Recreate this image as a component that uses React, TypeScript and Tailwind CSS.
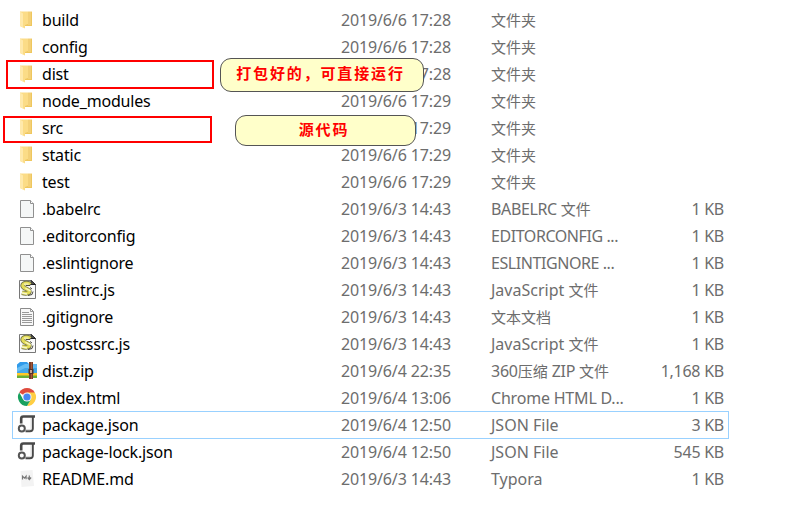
import React from "react";

type Kind = "folder" | "blank" | "script" | "text" | "zip" | "chrome" | "json" | "md";

interface Entry {
  name: string;
  date: string;
  type: string;
  size?: string;
  kind: Kind;
  selected?: boolean;
  typeTracking?: string;
}

const entries: Entry[] = [
  { name: "build", date: "2019/6/6 17:28", type: "文件夹", kind: "folder" },
  { name: "config", date: "2019/6/6 17:28", type: "文件夹", kind: "folder" },
  { name: "dist", date: "2019/6/6 17:28", type: "文件夹", kind: "folder" },
  { name: "node_modules", date: "2019/6/6 17:29", type: "文件夹", kind: "folder" },
  { name: "src", date: "2019/6/6 17:29", type: "文件夹", kind: "folder" },
  { name: "static", date: "2019/6/6 17:29", type: "文件夹", kind: "folder" },
  { name: "test", date: "2019/6/6 17:29", type: "文件夹", kind: "folder" },
  { name: ".babelrc", date: "2019/6/3 14:43", type: "BABELRC 文件", size: "1 KB", kind: "blank", typeTracking: "tracking-[-0.36px]" },
  { name: ".editorconfig", date: "2019/6/3 14:43", type: "EDITORCONFIG ...", size: "1 KB", kind: "blank", typeTracking: "tracking-[-0.43px]" },
  { name: ".eslintignore", date: "2019/6/3 14:43", type: "ESLINTIGNORE ...", size: "1 KB", kind: "blank", typeTracking: "tracking-[-0.43px]" },
  { name: ".eslintrc.js", date: "2019/6/3 14:43", type: "JavaScript 文件", size: "1 KB", kind: "script" },
  { name: ".gitignore", date: "2019/6/3 14:43", type: "文本文档", size: "1 KB", kind: "text" },
  { name: ".postcssrc.js", date: "2019/6/3 14:43", type: "JavaScript 文件", size: "1 KB", kind: "script" },
  { name: "dist.zip", date: "2019/6/4 22:35", type: "360压缩 ZIP 文件", size: "1,168 KB", kind: "zip", typeTracking: "tracking-[-0.25px]" },
  { name: "index.html", date: "2019/6/4 13:06", type: "Chrome HTML D...", size: "1 KB", kind: "chrome", typeTracking: "tracking-[-0.2px]" },
  { name: "package.json", date: "2019/6/4 12:50", type: "JSON File", size: "3 KB", kind: "json", selected: true },
  { name: "package-lock.json", date: "2019/6/4 12:50", type: "JSON File", size: "545 KB", kind: "json" },
  { name: "README.md", date: "2019/6/3 14:43", type: "Typora", size: "1 KB", kind: "md" },
];

function Glyph({ kind }: { kind: Kind }) {
  switch (kind) {
    case "folder":
      return (
        <>
          <path d="M8 3h6l.8-.8h.2V17H8z" fill="#efc75e" />
          <path d="M11 2.5h3V16h-3z" fill="#f3d078" />
          <path d="M3 2.5h8V15l-3 1v3.5L3 17z" fill="#fbdc87" />
          <path d="M3 2.5l3 2v14L3 17z" fill="#ffe9ab" />
        </>
      );
    case "blank":
      return (
        <>
          <path d="M3.5 2.5h10l3 3v14h-13z" fill="#f5f7f7" stroke="#909090" />
          <path d="M13.5 2.5v3h3" fill="#fff" stroke="#909090" />
        </>
      );
    case "text":
      return (
        <>
          <path d="M3.5 2.5h10l3 3v14h-13z" fill="#f8f8f8" stroke="#8b8b8b" />
          <path d="M13.5 2.5v3h3M5 6.5h7M5 8.5h10M5 10.5h10M5 12.5h10M5 14.5h10M5 16.5h10" fill="none" stroke="#999" />
        </>
      );
    case "script":
      return (
        <>
          <path d="M2.5 1.5h12l4 4v14h-16z" fill="#fafafa" stroke="#777" />
          <path d="M14 1.5v4h4.5z" fill="#555" stroke="#222" />
          <path d="M13 5.5C11.5 3 6 3.5 5.6 6.6c-.4 3 7.2 3.4 6.8 6-.3 2-4 2.2-7.4 1.2" fill="none" stroke="#77774a" strokeWidth="4.6" />
          <path d="M13 5.5C11.5 3.5 6 3.8 5.8 6.6c-.3 3 7 3.4 6.6 6-.3 1.8-4 2-7.4 1.2" fill="none" stroke="#e4dd58" strokeWidth="3.1" />
          <path d="M7 5.2h4.5M8.5 9.2l5 2.7M5 14l5 1" fill="none" stroke="#f8f6c6" strokeWidth="1.3" />
          <path d="M9 6.5h4l1-1.5M13 8.5l2 1.5M11 16.5l4-1 1-3" fill="none" stroke="#4b4b40" />
        </>
      );
    case "zip":
      return (
        <>
          <path d="M0 4.5L3 2h7l2 2h8v10H0z" fill="#319bea" />
          <path d="M0 8l8-4h12v8H0z" fill="#66bdf4" />
          <path d="M0 12l8-4h12v5H0z" fill="#43a7e9" />
          <path d="M0 13h20v3H0z" fill="#ffc928" />
          <path d="M0 15.5h20V18H0z" fill="#68ae38" />
          <path d="M12 2h4v17h-4z" fill="#783e29" />
          <path d="M14 2h1v17h-1z" fill="#a5583a" />
          <path d="M11.5 9h5v5h-5z" fill="#53332a" />
          <path d="M13 10h2v3h-2z" fill="#c6a38f" />
        </>
      );
    case "chrome":
      return (
        <>
          <path d="M10 10L2.21 5.5A9 9 0 0 1 17.8 5.5z" fill="#df4b3e" />
          <path d="M10 5.5h7.8A9 9 0 0 1 10 19l4-7z" fill="#ffce43" />
          <path d="M6.1 12.3L2.2 5.5A9 9 0 0 0 10 19l4-6.8z" fill="#18a15f" />
          <circle cx="10" cy="10" r="4.6" fill="#f5f5f5" />
          <circle cx="10" cy="10" r="3.6" fill="#4687f4" />
        </>
      );
    case "json":
      return (
        <>
          <path d="M4.2 9.5V4.6q0-2.1 2.2-2.1H18" fill="none" stroke="#494949" strokeWidth="2.6" />
          <path d="M15.8 3v11.5q0 2.7-2.8 2.7H8.5" fill="none" stroke="#494949" strokeWidth="2" />
          <path d="M14 4v11.5H9" fill="none" stroke="#dedede" />
          <circle cx="4.8" cy="14.6" r="3" fill="#fff" stroke="#555" strokeWidth="2" />
        </>
      );
    case "md":
      return (
        <>
          <path d="M3.5 3l12-1 1.5 16-12.5 1z" fill="#f3f3f3" />
          <path d="M5.5 11.5V8.2l2 2 1.6-2v3.1" fill="none" stroke="#777" strokeWidth="1.2" />
          <path d="M12.3 7.5v3.8m-1.7-1.8l1.7 2 1.8-2" fill="none" stroke="#777" strokeWidth="1.2" />
        </>
      );
  }
}

function TypeLabel({ text }: { text: string }) {
  const runs = text.split(/([\u4e00-\u9fff]+)/).filter(Boolean);
  return (
    <>
      {runs.map((run, i) => (
        <span key={i} className={/[\u4e00-\u9fff]/.test(run) ? "text-[15px] tracking-normal" : "text-[16px]"}>
          {run}
        </span>
      ))}
    </>
  );
}

function Row({ entry }: { entry: Entry }) {
  return (
    <div
      className={
        "flex w-[717px] items-center whitespace-pre pl-[5px] " +
        (entry.selected ? "-mb-px h-7 pt-px shadow-[inset_0_0_0_1px_#99d1ff]" : "h-[27px] pt-[2px]")
      }
    >
      <svg className="mb-1 h-5 w-5 shrink-0" viewBox="0 0 20 20">
        <Glyph kind={entry.kind} />
      </svg>
      <span className="ml-[5px] w-[299px] tracking-[-0.18px] text-black">{entry.name}</span>
      <span className="w-[150px] tracking-[-0.14px]">{entry.date}</span>
      <span className={"w-[150px] " + (entry.typeTracking ?? "")}>
        <TypeLabel text={entry.type} />
      </span>
      <span className="w-[83px] text-right tracking-[-0.25px]">{entry.size}</span>
    </div>
  );
}

export default function App() {
  return (
    <main className="relative h-[507px] w-[786px] overflow-hidden bg-white pl-3 pt-[6px] font-['Noto_Sans','Noto_Sans_CJK_SC',sans-serif] text-[16px] leading-[27px] text-[#6d6d6d]">
      {entries.map((entry) => (
        <Row key={entry.name} entry={entry} />
      ))}
      <div className="absolute left-[6px] top-[60px] h-[29px] w-[208px] border-2 border-[#f00]" />
      <div className="absolute left-[3px] top-[116px] h-[27px] w-[209px] border-2 border-[#f00]" />
      <div className="absolute left-[220px] top-[58px] flex h-[34px] w-[204px] justify-center rounded-[11px] border border-[#555] bg-[#ffffca] pr-[3px] font-['Noto_Sans_CJK_SC',sans-serif] text-[15px] font-bold tracking-[1.85px] text-[#f00]">
        打包好的，可直接运行
      </div>
      <div className="absolute left-[235px] top-[115px] flex h-[31px] w-[181px] items-start justify-center rounded-[11px] border border-[#555] bg-[#ffffca] pr-[3px] font-['Noto_Sans_CJK_SC',sans-serif] text-[15px] font-bold leading-[25px] tracking-[1.85px] text-[#f00]">
        源代码
      </div>
    </main>
  );
}
